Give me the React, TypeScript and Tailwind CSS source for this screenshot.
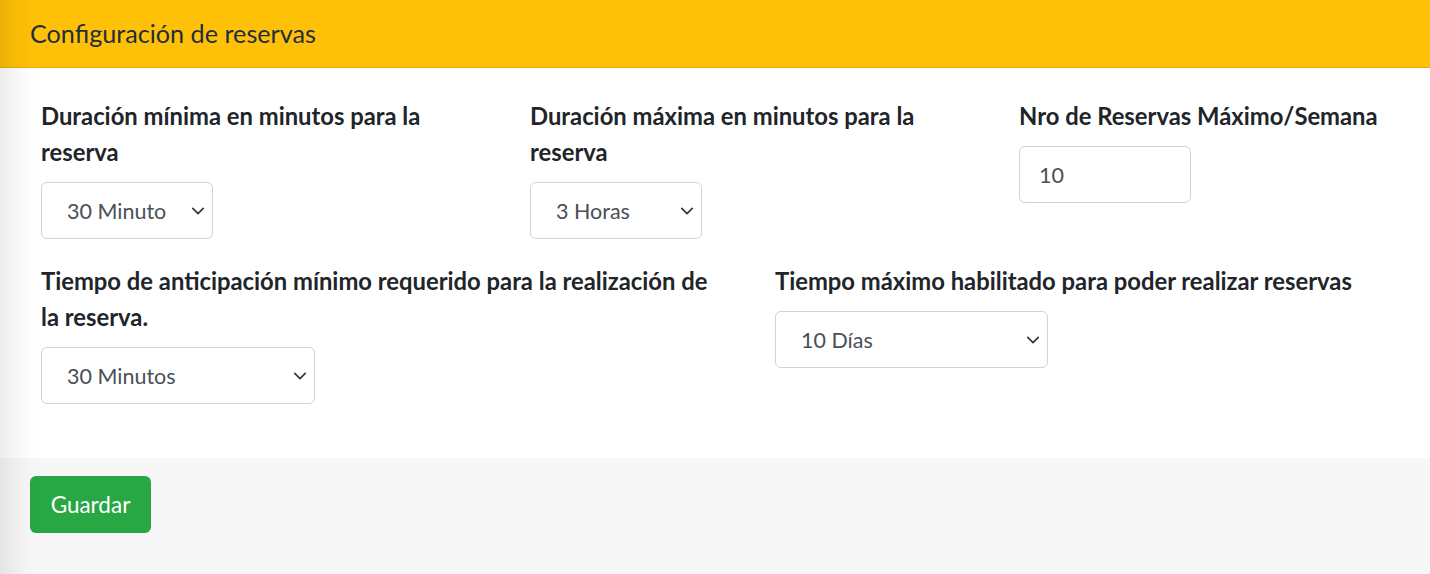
import React from "react";

const font = { fontFamily: "Lato, 'Noto Sans', sans-serif" };

function Chevron() {
  return (
    <svg width="14" height="9" viewBox="0 0 16 10" className="absolute right-[7px] top-1/2 -translate-y-1/2" fill="none">
      <path d="M2 2l6 6 6-6" stroke="#343a40" strokeWidth="2" strokeLinecap="round" strokeLinejoin="round" />
    </svg>
  );
}

function Select({ value, width }: { value: string; width: string }) {
  return (
    <div className={`relative h-[57px] ${width} rounded-[6px] border border-[#ced4da] bg-white flex items-center pl-[25px] pt-[1px] text-[21.5px] text-[#495057]`}>
      <span>{value}</span>
      <Chevron />
    </div>
  );
}

function Label({ children }: { children: React.ReactNode }) {
  return <div className="text-[23.8px] leading-[36px] font-bold text-[#212529] mb-[12px] whitespace-nowrap">{children}</div>;
}

export default function App() {
  return (
    <div className="relative w-[1430px] h-[574px] overflow-hidden bg-white" style={font}>
      <div className="h-[68px] bg-[#ffc107] border-b border-[#e6ad06] flex items-center px-[30px]">
        <h3 className="text-[25.2px] text-[#1f2d3d] font-normal">Configuración de reservas</h3>
      </div>
      <div className="pt-[30px] pb-[30px] pl-[41px]">
        <div className="flex">
          <div className="w-[489px] mb-[24px]">
            <Label>
              Duración mínima en minutos para la
              <br />
              reserva
            </Label>
            <Select value="30 Minuto" width="w-[172px]" />
          </div>
          <div className="w-[489px] mb-[24px]">
            <Label>
              Duración máxima en minutos para la
              <br />
              reserva
            </Label>
            <Select value="3 Horas" width="w-[172px]" />
          </div>
          <div className="w-[400px] mb-[24px]">
            <Label>Nro de Reservas Máximo/Semana</Label>
            <div className="h-[57px] w-[172px] rounded-[6px] border border-[#ced4da] bg-white flex items-center pl-[19px] pt-[1px] text-[21.5px] text-[#495057]">
              10
            </div>
          </div>
        </div>
        <div className="flex">
          <div className="w-[734px] mb-[24px]">
            <Label>
              Tiempo de anticipación mínimo requerido para la realización de
              <br />
              la reserva.
            </Label>
            <Select value="30 Minutos" width="w-[274px]" />
          </div>
          <div className="w-[600px] mb-[24px]">
            <Label>Tiempo máximo habilitado para poder realizar reservas</Label>
            <Select value="10 Días" width="w-[273px]" />
          </div>
        </div>
      </div>
      <div className="bg-[#f7f7f7] h-[200px] px-[30px] pt-[18px]">
        <button className="h-[57px] w-[121px] rounded-[6px] bg-[#28a745] text-white text-[22.5px] flex items-center justify-center">Guardar</button>
      </div>
      <div className="pointer-events-none absolute inset-y-0 left-0 w-[38px] bg-gradient-to-r from-black/[0.08] via-black/[0.025] to-transparent" />
    </div>
  );
}
